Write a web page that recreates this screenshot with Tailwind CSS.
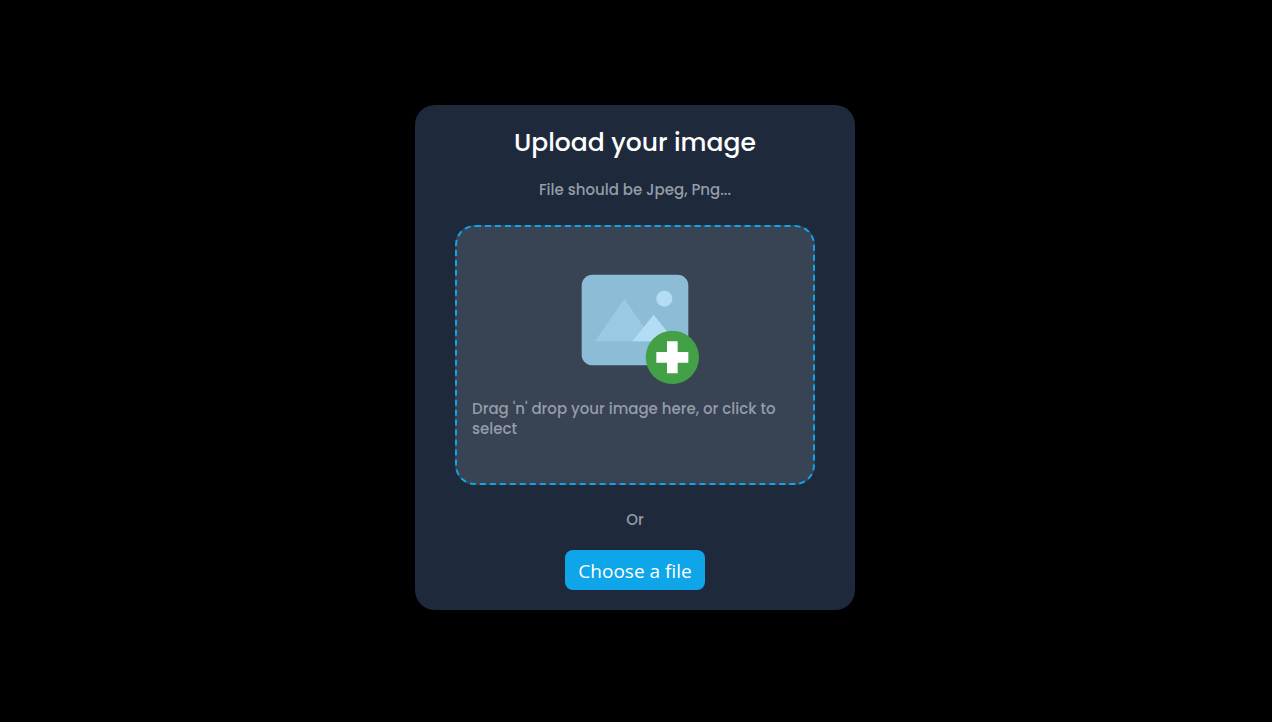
<!DOCTYPE html>
<html lang="en">
<head>
<meta charset="utf-8">
<meta name="viewport" content="width=device-width, initial-scale=1">
<title>Upload your image</title>
<script src="https://cdn.jsdelivr.net/npm/@tailwindcss/browser@4"></script>
</head>
<body class="bg-black">
<main class="flex min-h-screen items-center justify-center pr-0.5 pb-[7px] font-['Poppins','Inter',sans-serif] font-medium text-[#959ca8]">
  <section class="flex w-full max-w-[440px] flex-col items-center rounded-[20px] bg-[#1e293b] px-10 py-5">
    <h1 class="text-[25px] leading-9 font-medium text-white">Upload your image</h1>
    <p class="mt-[19px] text-[15px] leading-5">File should be Jpeg, Png...</p>
    <button type="button" class="mt-[25px] flex w-full cursor-pointer flex-col items-center rounded-[20px] border-2 border-dashed border-[#0ea5e9] bg-[#384353] px-[15px] pt-[29px] pb-11 text-left">
      <svg class="size-32" viewBox="0 0 48 48" aria-hidden="true">
        <path fill="#8CBCD6" d="M40 41H8c-2.200 0-4-1.800-4-4V11c0-2.200 1.800-4 4-4h32c2.200 0 4 1.800 4 4v26c0 2.200-1.800 4-4 4z"/>
        <circle fill="#B3DDF5" cx="35" cy="16" r="3"/>
        <path fill="#9AC9E3" d="M20 16 9 32h22z"/>
        <path fill="#B3DDF5" d="m31 22-8 10h16z"/>
        <circle fill="#43A047" cx="38" cy="38" r="10"/>
        <path fill="#fff" d="M36 32h4v12h-4zM32 36h12v4H32z"/>
      </svg>
      <span class="mt-[15px] w-full text-[15px] leading-5">Drag 'n' drop your image here, or click to select</span>
    </button>
    <p class="mt-[25px] text-[15px] leading-5">Or</p>
    <button type="button" class="mt-5 h-10 w-[140px] cursor-pointer rounded-lg bg-[#0ea5e9] pt-0.5 font-['Segoe_UI','Open_Sans',sans-serif] text-[19px] font-normal whitespace-nowrap text-white">Choose a file</button>
  </section>
</main>
</body>
</html>
